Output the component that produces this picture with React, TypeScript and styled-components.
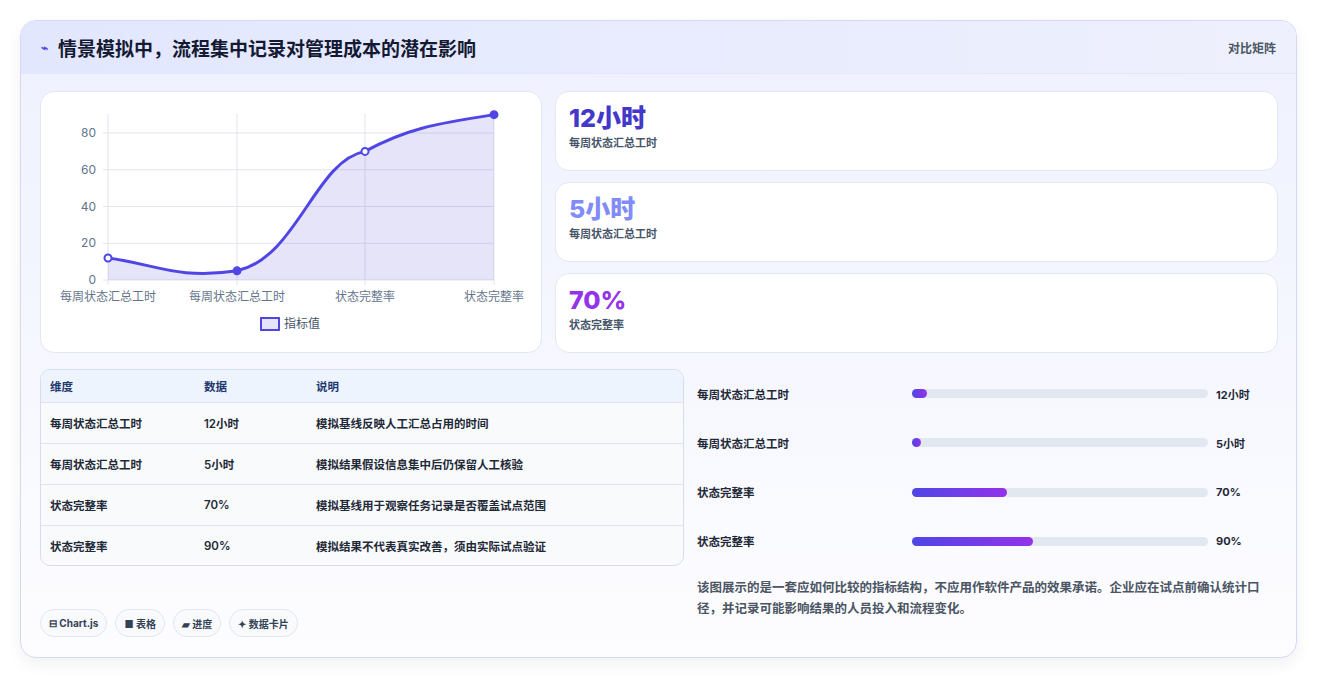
import React from "react";
import styled, { createGlobalStyle } from "styled-components";

const G = createGlobalStyle`
  body{margin:0;background:#fff;font-family:Inter,"Noto Sans CJK SC",sans-serif;}
`;
const Page = styled.div`padding:20px 21px 20px 20px;height:678px;box-sizing:border-box;`;
const Card = styled.div`
  height:638px;box-sizing:border-box;border:1px solid #d5d9f5;border-radius:16px;overflow:hidden;
  background:linear-gradient(180deg,#eef1fe 0%,#fdfdff 100%);
  box-shadow:0 6px 16px rgba(0,0,0,0.06);display:flex;flex-direction:column;
`;
const Header = styled.div`
  height:55px;display:flex;align-items:center;justify-content:space-between;padding:0 20px;
  background:linear-gradient(90deg,#e2e7fe,#eef0fd);border-bottom:1px solid #e3e7fb;
`;
const Title = styled.h1`margin:0;font-size:19px;font-weight:700;color:#141a33;display:flex;align-items:center;gap:10px;`;
const Small = styled.span`font-size:12px;color:#4b5563;font-weight:600;`;
const Body = styled.div`flex:1;padding:17px 18px 20px 19px;display:flex;flex-direction:column;`;
const Grid = styled.div<{l:number;h:number;mt:number}>`display:grid;grid-template-columns:${p=>p.l}px 1fr;column-gap:13px;height:${p=>p.h}px;margin-top:${p=>p.mt}px;`;
const Panel = styled.div`background:#fff;border:1px solid #e3e6f3;border-radius:14px;`;
const Stats = styled.div`display:flex;flex-direction:column;gap:11px;`;
const Stat = styled.div`flex:1;background:#fff;border:1px solid #e3e6f3;border-radius:14px;padding:11px 13px;display:flex;flex-direction:column;`;
const Big = styled.div<{c:string}>`font-size:25px;font-weight:800;color:${p=>p.c};line-height:30px;`;
const Lbl = styled.div`font-size:11px;color:#475569;margin-top:1px;font-weight:600;`;
const Table = styled.div`border:1px solid #d7ddf0;border-radius:10px;overflow:hidden;background:#f8fafc;height:195px;`;
const Row = styled.div<{h?:boolean}>`display:grid;grid-template-columns:154px 112px 1fr;padding:0 9px;font-size:11.5px;font-weight:600;
  height:${p=>p.h?32:40}px;align-items:center;color:${p=>p.h?"#1e3a6e":"#1f2937"};
  background:${p=>p.h?"#eef4fe":"transparent"};border-bottom:1px solid #dfe4ee;&:last-child{border-bottom:none}`;
const Bars = styled.div`display:flex;flex-direction:column;justify-content:space-around;padding:0 18px 0 0;`;
const BarRow = styled.div`display:grid;grid-template-columns:215px 296px 1fr;align-items:center;font-size:11.5px;font-weight:600;color:#1f2937;`;
const Track = styled.div`height:9px;border-radius:5px;background:#e2e8f0;`;
const Fill = styled.div`height:100%;border-radius:5px;background:linear-gradient(90deg,#4f46e5,#9333ea);`;
const Val = styled.span`padding-left:8px;font-weight:700;font-size:11px;`;
const Pills = styled.div`display:flex;gap:8px;align-items:flex-end;padding-bottom:0;`;
const Pill = styled.span`border:1px solid #e2e6f2;border-radius:14px;padding:0 8px;height:26px;display:flex;align-items:center;font-size:10px;font-weight:700;color:#334155;background:#f8fafc;`;
const Note = styled.p`margin:0;padding-top:12px;font-size:12.5px;line-height:21px;color:#4b5563;font-weight:600;`;

const X=[67,196,324,453]; const y=(v:number)=>188-v*1.8375;
const pts=[12,5,70,90].map((v,i)=>[X[i],y(v)]);
function Chart(){
  const d=`M${pts[0]} C${X[0]+45},${y(9)} ${X[1]-60},${y(0)} ${X[1]},${y(5)} C${X[1]+60},${y(12)} ${X[2]-50},${y(65)} ${X[2]},${y(70)} C${X[2]+40},${y(82)} ${X[3]-60},${y(85)} ${X[3]},${y(90)}`;
  return <svg width="500" height="260" style={{display:"block"}}>
    {[0,20,40,60,80].map(v=><g key={v}><line x1={62} x2={453} y1={y(v)} y2={y(v)} stroke="#e2e4ef"/><text x={55} y={y(v)+4} fontSize="12" fill="#64748b" textAnchor="end">{v}</text></g>)}
    {X.map(x=><line key={x} x1={x} x2={x} y1={22} y2={y(0)+5} stroke="#e2e4ef"/>)}
    <path d={`${d} L${X[3]},${y(0)} L${X[0]},${y(0)}Z`} fill="rgba(99,90,220,0.16)"/>
    <path d={d} fill="none" stroke="#4f46e5" strokeWidth="3"/>
    {pts.map(([a,b],i)=><circle key={i} cx={a} cy={b} r="3.5" fill={i%2?"#4f46e5":"#fff"} stroke="#4f46e5" strokeWidth="2"/>)}
    {["每周状态汇总工时","每周状态汇总工时","状态完整率","状态完整率"].map((t,i)=><text key={i} x={X[i]} y={209} fontSize="12" fill="#64748b" textAnchor="middle">{t}</text>)}
    <rect x={220} y={226} width={18} height={12} fill="rgba(99,90,220,0.16)" stroke="#4f46e5" strokeWidth="2"/>
    <text x={243} y={236} fontSize="12" fill="#475569">指标值</text>
  </svg>;
}

export default function App(){
  const rows=[["每周状态汇总工时","12小时","模拟基线反映人工汇总占用的时间"],["每周状态汇总工时","5小时","模拟结果假设信息集中后仍保留人工核验"],["状态完整率","70%","模拟基线用于观察任务记录是否覆盖试点范围"],["状态完整率","90%","模拟结果不代表真实改善，须由实际试点验证"]];
  const bars:[string,number,string][]=[["每周状态汇总工时",5,"12小时"],["每周状态汇总工时",3,"5小时"],["状态完整率",32,"70%"],["状态完整率",41,"90%"]];
  return <Page><G/><Card>
    <Header><Title><span style={{fontSize:12,color:"#4f46e5"}}>⌁</span>情景模拟中，流程集中记录对管理成本的潜在影响</Title><Small>对比矩阵</Small></Header>
    <Body>
      <Grid l={502} h={262} mt={0}>
        <Panel><Chart/></Panel>
        <Stats>
          <Stat><Big c="#4338ca">12小时</Big><Lbl>每周状态汇总工时</Lbl></Stat>
          <Stat><Big c="#818cf8">5小时</Big><Lbl>每周状态汇总工时</Lbl></Stat>
          <Stat><Big c="#9333ea">70%</Big><Lbl>状态完整率</Lbl></Stat>
        </Stats>
      </Grid>
      <Grid l={644} h={196} mt={16}>
        <Table>
          <Row h><span>维度</span><span>数据</span><span>说明</span></Row>
          {rows.map((r,i)=><Row key={i}>{r.map((c,j)=><span key={j}>{c}</span>)}</Row>)}
        </Table>
        <Bars>{bars.map((b,i)=><BarRow key={i}><span>{b[0]}</span><Track><Fill style={{width:`${b[1]}%`}}/></Track><Val>{b[2]}</Val></BarRow>)}</Bars>
      </Grid>
      <Grid l={644} h={72} mt={0}>
        <Pills><Pill>⊟ Chart.js</Pill><Pill>■ 表格</Pill><Pill>▰ 进度</Pill><Pill>✦ 数据卡片</Pill></Pills>
        <Note>该图展示的是一套应如何比较的指标结构，不应用作软件产品的效果承诺。企业应在试点前确认统计口径，并记录可能影响结果的人员投入和流程变化。</Note>
      </Grid>
    </Body>
  </Card></Page>;
}
